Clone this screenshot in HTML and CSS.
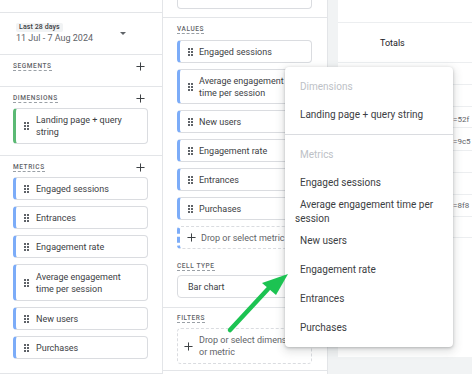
FILE: index.html
```html
<!DOCTYPE html>
<html>
<head>
<meta charset="utf-8">
<link rel="stylesheet" href="styles.css">
</head>
<body>
<div class="app">
  <div class="col left">
    <div class="sec top"></div>
    <div class="sec date">
      <div class="date-info">
        <span class="chip">Last 28 days</span>
        <span class="range">11 Jul - 7 Aug 2024</span>
      </div>
      <span class="caret"></span>
    </div>
    <div class="sec segs">
      <div class="head"><span class="lbl">SEGMENTS</span><svg class="plus" viewBox="0 0 10 10"><path d="M5 0.5V9.5M0.5 5H9.5"/></svg></div>
    </div>
    <div class="sec dims">
      <div class="head"><span class="lbl">DIMENSIONS</span><svg class="plus" viewBox="0 0 10 10"><path d="M5 0.5V9.5M0.5 5H9.5"/></svg></div>
      <div class="card green tall"><span class="grip"></span><span class="txt">Landing page + query<br>string</span></div>
    </div>
    <div class="sec mets">
      <div class="head"><span class="lbl">METRICS</span><svg class="plus" viewBox="0 0 10 10"><path d="M5 0.5V9.5M0.5 5H9.5"/></svg></div>
      <div class="list">
        <div class="card"><span class="grip"></span><span class="txt">Engaged sessions</span></div>
        <div class="card"><span class="grip"></span><span class="txt">Entrances</span></div>
        <div class="card"><span class="grip"></span><span class="txt">Engagement rate</span></div>
        <div class="card tall2"><span class="grip"></span><span class="txt">Average engagement<br>time per session</span></div>
        <div class="card"><span class="grip"></span><span class="txt">New users</span></div>
        <div class="card"><span class="grip"></span><span class="txt">Purchases</span></div>
      </div>
    </div>
  </div>

  <div class="col mid">
    <div class="sec mtop"><div class="stub"></div></div>
    <div class="sec vals">
      <div class="head"><span class="lbl">VALUES</span></div>
      <div class="list">
        <div class="card"><span class="grip"></span><span class="txt">Engaged sessions</span></div>
        <div class="card tall3"><span class="grip"></span><span class="txt">Average engagement<br>time per session</span></div>
        <div class="card"><span class="grip"></span><span class="txt">New users</span></div>
        <div class="card"><span class="grip"></span><span class="txt">Engagement rate</span></div>
        <div class="card"><span class="grip"></span><span class="txt">Entrances</span></div>
        <div class="card"><span class="grip"></span><span class="txt">Purchases</span></div>
        <div class="drop"><svg class="plus big" viewBox="0 0 10 10"><path d="M5 0.5V9.5M0.5 5H9.5"/></svg><span class="txt">Drop or select metric</span></div>
      </div>
      <div class="head cell"><span class="lbl">CELL TYPE</span></div>
      <div class="select">Bar chart</div>
    </div>
    <div class="sec filt">
      <div class="head"><span class="lbl">FILTERS</span></div>
      <div class="fdrop"><svg class="plus big" viewBox="0 0 10 10"><path d="M5 0.5V9.5M0.5 5H9.5"/></svg><span class="txt">Drop or select dimension<br>or metric</span></div>
    </div>
  </div>

  <div class="gutter">
    <div class="panel">
      <div class="prow phead"></div>
      <div class="prow totals"><span class="tot">Totals</span></div>
      <div class="prow r20"></div>
      <div class="prow r21"></div>
      <div class="prow r19"><span class="val v1">=52f</span></div>
      <div class="prow r22"><span class="val v2">=9c5</span></div>
      <div class="prow r21"></div>
      <div class="prow r21"></div>
      <div class="prow r20"><span class="val v3">=8f8</span></div>
      <div class="prow r19"></div>
    </div>
  </div>
</div>

<div class="menu">
  <div class="mgroup first">
    <div class="mi hd">Dimensions</div>
    <div class="mi">Landing page + query string</div>
  </div>
  <div class="mgroup">
    <div class="mi hd">Metrics</div>
    <div class="mi">Engaged sessions</div>
    <div class="mi two">Average engagement time per session</div>
    <div class="mi">New users</div>
    <div class="mi">Engagement rate</div>
    <div class="mi">Entrances</div>
    <div class="mi">Purchases</div>
  </div>
</div>

<svg class="arrow" viewBox="0 0 472 374" width="472" height="374">
  <path d="M230 330 L268 289" stroke="#1cc352" stroke-width="4.5" stroke-linecap="round" fill="none"/>
  <polygon points="288,274 262,283 276,295" fill="#1cc352"/>
</svg>
</body>
</html>
```

FILE: styles.css
```css
html, body {
  margin: 0;
  padding: 0;
  background: #fff;
}
body {
  width: 472px;
  height: 374px;
  overflow: hidden;
  font-family: Roboto, "Liberation Sans", sans-serif;
  color: #3c4043;
  position: relative;
}
.app {
  display: flex;
  height: 374px;
}
.col {
  display: flex;
  flex-direction: column;
  background: #fff;
  box-sizing: border-box;
  border-right: 1px solid #e3e5e8;
}
.left {
  width: 163px;
}
.mid {
  width: 165px;
}
.sec {
  border-bottom: 1px solid #e3e5e8;
  box-sizing: border-box;
}
.left .sec {
  padding: 0 14px 0 13px;
}
.mid .sec {
  padding: 0 15px 0 14px;
}
.top {
  height: 13px;
}
.date {
  height: 42px;
  display: flex;
  align-items: flex-start;
  justify-content: space-between;
  padding-top: 10px !important;
}
.date-info {
  display: flex;
  flex-direction: column;
  align-items: flex-start;
  margin-left: 3px;
}
.chip {
  font-size: 7px;
  font-weight: 500;
  line-height: 9px;
  background: #f1f3f4;
  padding: 0 3px;
  border-radius: 2px;
  color: #3c4043;
  letter-spacing: 0.1px;
}
.range {
  font-size: 9px;
  line-height: 10px;
  margin-top: 1px;
  color: #5f6368;
}
.caret {
  width: 0;
  height: 0;
  border-left: 3px solid transparent;
  border-right: 3px solid transparent;
  border-top: 3px solid #5f6368;
  margin-top: 9px;
  margin-right: 22px;
}
.segs {
  height: 32px;
  padding-top: 6px !important;
}
.head {
  display: flex;
  align-items: center;
  justify-content: space-between;
  height: 10px;
}
.lbl {
  font-size: 6.5px;
  font-weight: 500;
  letter-spacing: 0.6px;
  color: #5f6368;
  line-height: 8px;
  border-bottom: 1px dashed #9aa0a6;
}
.plus {
  width: 9px;
  height: 9px;
  margin-right: 3px;
}
.plus path {
  stroke: #3c4043;
  stroke-width: 1.1;
  fill: none;
}
.dims {
  height: 69px;
  padding-top: 6px !important;
}
.dims .card {
  margin-top: 5px;
}
.mets {
  flex: 1;
  padding-top: 6px !important;
}
.mets .list {
  margin-top: 5px;
}
.list {
  display: flex;
  flex-direction: column;
  gap: 6px;
}
.card {
  display: flex;
  align-items: center;
  gap: 7px;
  height: 23px;
  box-sizing: border-box;
  background: #fff;
  border: 1px solid #dadce0;
  border-left: 3px solid #7cacf8;
  border-radius: 4px;
  padding-left: 8px;
  font-size: 9px;
  line-height: 12px;
  color: #3c4043;
  white-space: nowrap;
  overflow: hidden;
}
.card.green {
  border-left-color: #5bb974;
}
.card.tall {
  height: 36px;
}
.card.tall2 {
  height: 37px;
}
.card.tall3 {
  height: 35px;
}
.grip {
  flex: none;
  width: 5px;
  height: 8px;
  background-image: radial-gradient(circle at 1px 1px, #5f6368 0.75px, transparent 1.05px);
  background-size: 3px 3px;
  background-position: 0 0;
}
.mid .card {
  gap: 6px;
}
.mtop {
  height: 18px;
}
.stub {
  height: 9px;
  border: 1px solid #dadce0;
  border-top: none;
  border-radius: 0 0 4px 4px;
  box-sizing: border-box;
}
.vals {
  height: 290px;
  padding-top: 6px !important;
}
.vals .list {
  margin-top: 6px;
}
.drop {
  display: flex;
  align-items: center;
  gap: 5px;
  height: 23px;
  box-sizing: border-box;
  border: 1px dashed #dadce0;
  border-left: 3px dashed #7cacf8;
  border-radius: 4px;
  padding-left: 7px;
  font-size: 9px;
  color: #5f6368;
  white-space: nowrap;
  overflow: hidden;
}
.plus.big {
  width: 9px;
  height: 9px;
  margin-right: 0;
  flex: none;
}
.head.cell {
  margin-top: 12px;
}
.select {
  margin-top: 4px;
  height: 23px;
  box-sizing: border-box;
  border: 1px solid #dadce0;
  border-radius: 4px;
  padding-left: 10px;
  display: flex;
  align-items: center;
  font-size: 9px;
  color: #3c4043;
}
.filt {
  height: 63px;
  padding-top: 5px !important;
}
.fdrop {
  margin-top: 5px;
  height: 36px;
  box-sizing: border-box;
  border: 1px dashed #dadce0;
  border-radius: 4px;
  display: flex;
  align-items: center;
  gap: 6px;
  padding-left: 6px;
  font-size: 9px;
  line-height: 12px;
  color: #5f6368;
  white-space: nowrap;
  overflow: hidden;
}
.gutter {
  flex: 1;
  background: #f1f3f4;
  padding-left: 10px;
}
.panel {
  background: #fff;
  height: 357px;
  display: flex;
  flex-direction: column;
  overflow: hidden;
}
.prow {
  border-bottom: 1px solid #eceef0;
  position: relative;
  flex: none;
}
.phead {
  height: 22px;
}
.totals {
  height: 39px;
  display: flex;
  align-items: center;
}
.tot {
  font-size: 9px;
  color: #202124;
  margin-left: 42px;
}
.r19 { height: 20px; }
.r20 { height: 21px; }
.r21 { height: 21px; }
.r22 { height: 22px; }
.val {
  position: absolute;
  left: 115px;
  font-size: 8px;
  color: #5f6368;
  white-space: nowrap;
}
.v1 { top: 8px; }
.v2 { top: 9px; }
.v3 { top: 6px; }
.menu {
  position: absolute;
  left: 285px;
  top: 67px;
  width: 168px;
  height: 280px;
  box-sizing: border-box;
  background: #fff;
  border-radius: 4px;
  box-shadow: 0 1px 3px rgba(60, 64, 67, 0.3), 0 3px 8px 2px rgba(60, 64, 67, 0.15);
  padding: 5px 0;
}
.mgroup.first {
  padding-bottom: 6px;
  border-bottom: 1px solid #dadce0;
  margin-bottom: 5px;
}
.mi {
  height: 29px;
  display: flex;
  align-items: center;
  padding-left: 15px;
  font-size: 10px;
  color: #3c4043;
  white-space: nowrap;
}
.mgroup.first .mi {
  height: 28px;
}
.mi.hd {
  color: #bdc1c6;
  height: 28px;
}
.mi.two {
  display: block;
  white-space: normal;
  padding: 0 10px 0 10px;
  text-indent: 5px;
  line-height: 14px;
  padding-top: 0.5px;
  box-sizing: border-box;
}
.arrow {
  position: absolute;
  left: 0;
  top: 0;
  pointer-events: none;
}
```
